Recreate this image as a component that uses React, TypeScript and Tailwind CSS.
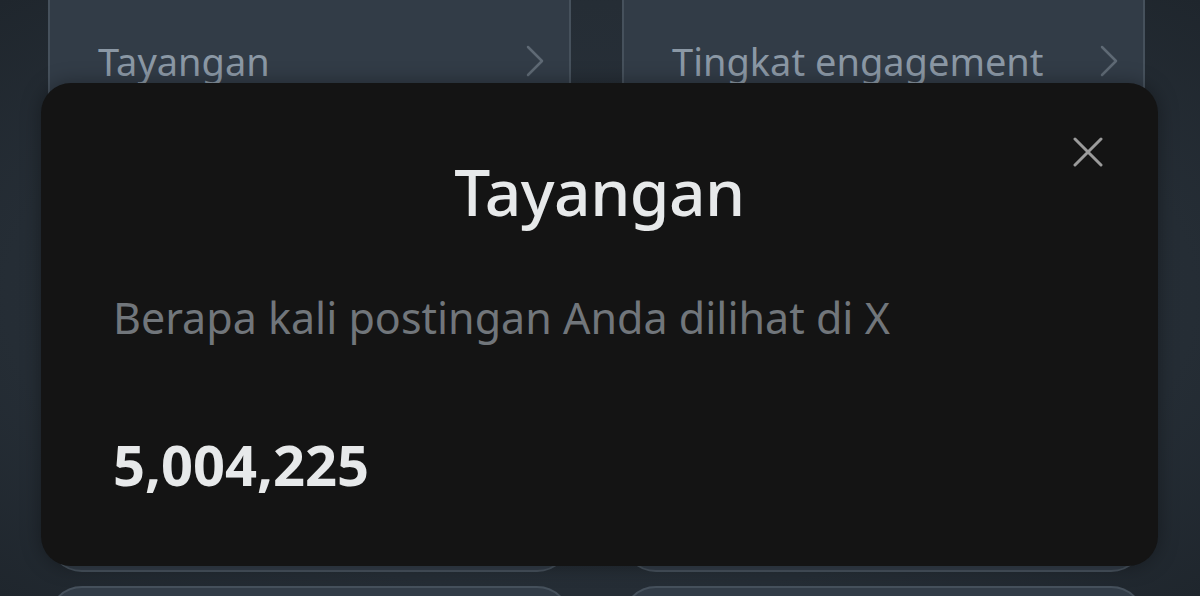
import React from "react";

function Chevron() {
  return (
    <svg width="20" height="32" viewBox="0 0 20 32" fill="none" className="shrink-0">
      <path d="M3 2 L17 16 L3 30" stroke="#5f6a75" strokeWidth="2.5" strokeLinecap="round" strokeLinejoin="round" />
    </svg>
  );
}

function MetricCard({ label }: { label?: string }) {
  return (
    <div className="h-[612px] rounded-[34px] border-2 border-[#46515c] bg-[#323c47] pl-[48px] pr-[24px] pt-[80px]">
      {label && (
        <div className="flex items-center justify-between">
          <span className="text-[38px] leading-none text-[#8b98a5]">{label}</span>
          <Chevron />
        </div>
      )}
    </div>
  );
}

export default function App() {
  return (
    <div
      className="relative h-[596px] w-[1200px] overflow-hidden bg-[radial-gradient(ellipse_at_center,#2a333d_0%,#252d35_70%,#1f262d_100%)]"
      style={{ fontFamily: '"Noto Sans", "Open Sans", sans-serif' }}
    >
      {/* analytics cards behind the sheet */}
      <div className="-mt-[40px] grid grid-cols-[523px_523px] gap-x-[51px] gap-y-[14px] pl-[48px]">
        <MetricCard label="Tayangan" />
        <MetricCard label="Tingkat engagement" />
        <MetricCard />
        <MetricCard />
      </div>

      {/* info sheet */}
      <div className="absolute left-[41px] top-[83px] h-[483px] w-[1117px] rounded-[30px] bg-[#141414] shadow-[0_0_20px_rgba(0,0,0,0.35)]">
        <button className="absolute right-[54px] top-[53px] flex h-[32px] w-[32px] items-center justify-center">
          <svg width="30" height="30" viewBox="0 0 30 30" fill="none">
            <path d="M2 2 L28 28 M28 2 L2 28" stroke="#9b9b9b" strokeWidth="3" strokeLinecap="round" />
          </svg>
        </button>
        <div className="flex flex-col px-[72px]">
          <h1 className="mt-[77px] text-center text-[64px] font-medium leading-none tracking-[-0.5px] text-[#e7e9ea]">
            Tayangan
          </h1>
          <p className="mt-[72px] text-[43px] leading-none text-[#71767b]">
            Berapa kali postingan Anda dilihat di X
          </p>
          <p className="mt-[97px] text-[56px] font-bold leading-none text-[#e7e9ea]">5,004,225</p>
        </div>
      </div>
    </div>
  );
}
